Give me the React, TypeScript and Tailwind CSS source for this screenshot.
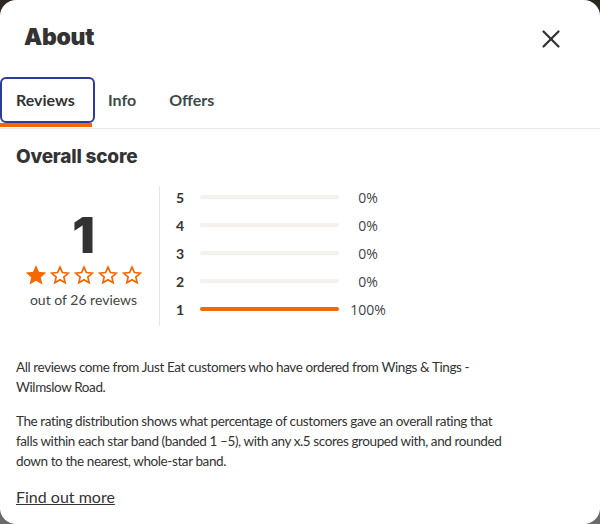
import { X } from 'lucide-react';

const rows = [
  { star: 5, pct: 0 },
  { star: 4, pct: 0 },
  { star: 3, pct: 0 },
  { star: 2, pct: 0 },
  { star: 1, pct: 100 },
];

function Star({ filled }: { filled: boolean }) {
  return (
    <svg viewBox="0 0 24 24" className="w-[20px] h-[20px]">
      <path
        d="M12 2.5l2.9 6.6 7.1.6-5.4 4.7 1.6 7-6.2-3.7-6.2 3.7 1.6-7L2 9.7l7.1-.6z"
        fill={filled ? '#f36805' : 'none'}
        stroke="#f36805"
        strokeWidth="2"
      />
    </svg>
  );
}

export default function App() {
  return (
    <div className="w-[600px] h-[524px] bg-gradient-to-b from-[#2c2620] via-[#5e5645] to-[#6b6b6b] font-['Lato',sans-serif]">
      <div className="h-full bg-white rounded-2xl overflow-hidden text-[#333]">
        <header className="h-[77px] flex items-center justify-between pl-6 pr-[34px] pb-[3px]">
          <h1 className="text-[23px] font-black tracking-[-0.3px] text-[#333] font-['Inter',sans-serif]">About</h1>
          <X className="w-[30px] h-[30px] text-[#333] mt-[4px]" strokeWidth={1.8} />
        </header>

        <nav className="flex border-b border-[#e8e8e8] h-[52px]">
          <div className="w-[95px] flex flex-col">
            <button className="h-[46px] border-2 border-[#2a3b9b] rounded-md pl-[14px] text-left text-[16px] font-bold text-[#333]">
              Reviews
            </button>
            <div className="w-[92px] h-[4px] bg-[#f36805]" />
          </div>
          <button className="h-[46px] pl-[13px] pr-[33px] text-[16px] font-bold text-[#3c4a4c]">Info</button>
          <button className="h-[46px] text-[16px] font-bold text-[#3c4a4c]">Offers</button>
        </nav>

        <main className="px-4">
          <h2 className="mt-[16px] text-[19px] font-extrabold tracking-[-0.2px] leading-6 font-['Inter',sans-serif]">
            Overall score
          </h2>

          <section className="mt-[15px] flex h-[142px]">
            <div className="w-[144px] border-r border-[#e4e4e4] flex flex-col items-center justify-center pr-[8px] pt-[8px] mt-[2px]">
              <div className="text-[50px] font-black leading-[48px] text-[#333] font-['Inter',sans-serif]">1</div>
              <div className="flex gap-[4px] mt-[6px]">
                {[0, 1, 2, 3, 4].map((i) => (
                  <Star key={i} filled={i === 0} />
                ))}
              </div>
              <p className="text-[14px] text-[#444] mt-[4px]">out of 26 reviews</p>
            </div>
            <div className="flex flex-col pl-[16px] mt-[-1px]">
              {rows.map((r) => (
                <div key={r.star} className="h-[28px] flex items-center">
                  <span className="w-[24px] text-[14px] font-bold text-[#333]">{r.star}</span>
                  <div className="w-[139px] h-[4px] rounded-full bg-[#f5f2ed]">
                    <div className="h-full rounded-full bg-[#f36805]" style={{ width: `${r.pct}%` }} />
                  </div>
                  <span className="ml-[8px] w-[42px] text-center text-[14px] text-[#444] font-['Open_Sans',sans-serif]">
                    {r.pct}%
                  </span>
                </div>
              ))}
            </div>
          </section>

          <div className="mt-[31px] w-[498px] text-[13.5px] tracking-[-0.4px] leading-5 text-[#333]">
            <p>
              All reviews come from Just Eat customers who have ordered from Wings &amp; Tings - Wilmslow Road.
            </p>
            <p className="mt-[14px]">
              The rating distribution shows what percentage of customers gave an overall rating that falls within each
              star band (banded 1 –5), with any x.5 scores grouped with, and rounded down to the nearest, whole-star
              band.
            </p>
          </div>
          <a className="block mt-[14px] text-[16px] underline leading-6 text-[#333]">Find out more</a>
        </main>
      </div>
    </div>
  );
}
